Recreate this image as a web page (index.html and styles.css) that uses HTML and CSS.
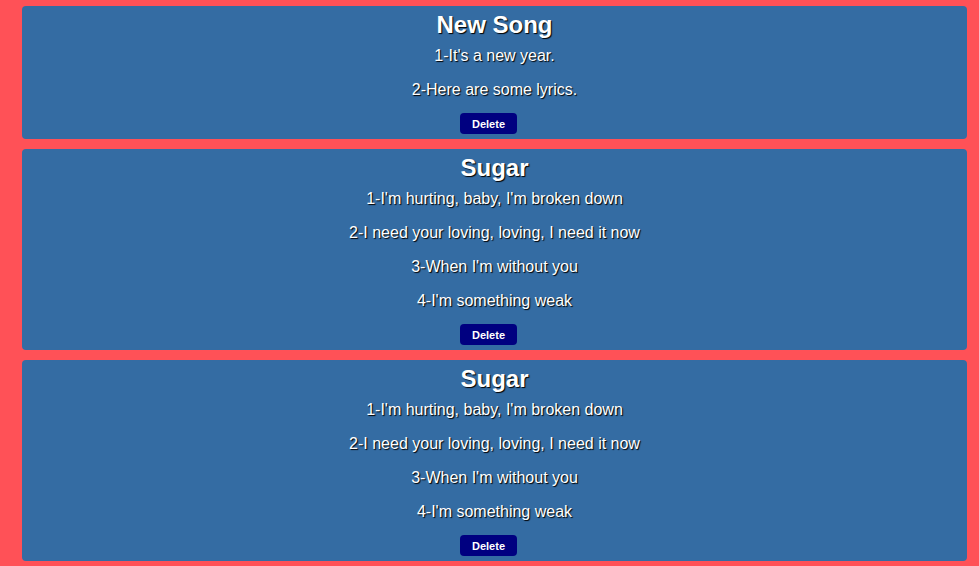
FILE: index.html
```html
<!DOCTYPE html>
<html>
<head>
<meta charset="utf-8">
<link rel="stylesheet" href="styles.css">
</head>
<body>
<div class="list">
  <div class="song">
    <h1 class="title">New Song</h1>
    <p class="line">1-It's a new year.</p>
    <p class="line">2-Here are some lyrics.</p>
    <button class="del">Delete</button>
  </div>
  <div class="song">
    <h1 class="title">Sugar</h1>
    <p class="line">1-I'm hurting, baby, I'm broken down</p>
    <p class="line">2-I need your loving, loving, I need it now</p>
    <p class="line">3-When I'm without you</p>
    <p class="line">4-I'm something weak</p>
    <button class="del">Delete</button>
  </div>
  <div class="song">
    <h1 class="title">Sugar</h1>
    <p class="line">1-I'm hurting, baby, I'm broken down</p>
    <p class="line">2-I need your loving, loving, I need it now</p>
    <p class="line">3-When I'm without you</p>
    <p class="line">4-I'm something weak</p>
    <button class="del">Delete</button>
  </div>
</div>
</body>
</html>
```
FILE: styles.css
```css
html, body {
  margin: 0;
  padding: 0;
  background: #ff5157;
  font-family: "Liberation Sans", Arial, sans-serif;
}
.list {
  padding: 6px 12px 0 22px;
  display: flex;
  flex-direction: column;
  gap: 10px;
}
.song {
  background: #346ca3;
  border-radius: 4px;
  padding: 4px 0 5px;
  text-align: center;
  color: #fff;
  text-shadow: 1px 1px 1px #000;
}
.title {
  margin: 0 0 6px;
  font-size: 24px;
  line-height: 30px;
  font-weight: bold;
}
.line {
  margin: 0 0 14px;
  font-size: 16px;
  line-height: 20px;
}
.line:last-of-type {
  margin-bottom: 13px;
}
.del {
  display: block;
  margin: 0 auto;
  position: relative;
  left: -6px;
  height: 21px;
  width: 57px;
  padding: 0;
  border: none;
  border-radius: 4px;
  background: #000080;
  color: #fff;
  font-family: "Liberation Sans", Arial, sans-serif;
  font-size: 11px;
  font-weight: bold;
  text-shadow: none;
}
```
